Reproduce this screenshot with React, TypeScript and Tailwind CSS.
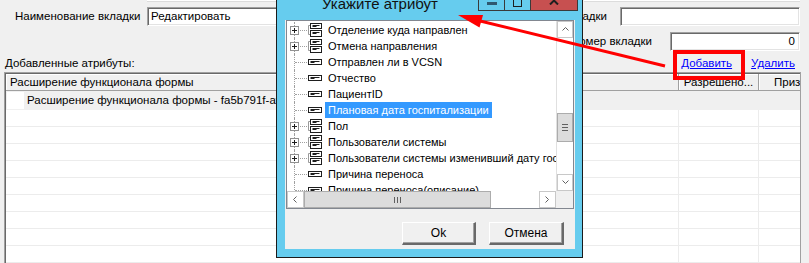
import React from "react";

const items: { t: string; g?: boolean; sel?: boolean }[] = [
  { t: "Отделение куда направлен", g: true },
  { t: "Отмена направления", g: true },
  { t: "Отправлен ли в VCSN" },
  { t: "Отчество" },
  { t: "ПациентID" },
  { t: "Плановая дата госпитализации", sel: true },
  { t: "Пол", g: true },
  { t: "Пользователи системы", g: true },
  { t: "Пользователи системы изменивший дату госпитализации", g: true },
  { t: "Причина переноса" },
  { t: "Причина переноса(описание)" },
];

const inputCls =
  "bg-white border border-t-[#a0a0a0] border-l-[#a0a0a0] border-r-white border-b-white shadow-[inset_1px_1px_0_#696969,inset_-1px_-1px_0_#e3e3e3]";

function GroupIcon() {
  return (
    <svg width="16" height="16" viewBox="0 0 16 16" className="shrink-0">
      <path d="M1.5 3.5V12.5M1.5 3.5H3.5M1.5 12.5H3.5" stroke="#9a9a9a" fill="none" />
      <rect x="3.5" y="1.5" width="11" height="5" fill="#fff" stroke="#1e1e1e" />
      <path d="M5.5 3.5H12.5M5.5 4.5H9.5" stroke="#1e1e1e" />
      <rect x="3.5" y="8.5" width="11" height="6" fill="#fff" stroke="#1e1e1e" />
      <path d="M5.5 10.5H12.5M5.5 11.5H9.5" stroke="#1e1e1e" />
    </svg>
  );
}

function LeafIcon() {
  return (
    <svg width="16" height="16" viewBox="0 0 16 16" className="shrink-0">
      <rect x="1.5" y="5.5" width="13" height="5" fill="#fff" stroke="#1e1e1e" />
      <path d="M3.5 7.5H12.5M3.5 8.5H7.5" stroke="#1e1e1e" />
    </svg>
  );
}

function TreeRow({ t, g, sel }: { t: string; g?: boolean; sel?: boolean }) {
  return (
    <div className="flex h-[16px] shrink-0 items-center whitespace-nowrap">
      <div className="relative h-full w-[20px] shrink-0">
        <div className="absolute left-[7px] top-0 h-full border-l border-dotted border-[#a0a0a0]" />
        <div className="absolute left-[8px] top-[8px] w-[12px] border-t border-dotted border-[#a0a0a0]" />
        {g && (
          <div className="absolute left-[3px] top-[4px] flex h-[9px] w-[9px] items-center justify-center border border-[#919191] bg-white">
            <svg width="7" height="7" viewBox="0 0 7 7">
              <path d="M1 3.5H6M3.5 1V6" stroke="#1e1e1e" />
            </svg>
          </div>
        )}
      </div>
      {g ? <GroupIcon /> : <LeafIcon />}
      <span
        className={
          "ml-[2px] flex h-full items-center px-[3px] " +
          (sel ? "bg-[#3399ff] text-white" : "text-black")
        }
      >
        {t}
      </span>
    </div>
  );
}

function Chevron({ dir }: { dir: "up" | "down" | "left" | "right" }) {
  const d =
    dir === "up"
      ? "M1.5 5.5L4.5 2.5L7.5 5.5"
      : dir === "down"
      ? "M1.5 2.5L4.5 5.5L7.5 2.5"
      : dir === "left"
      ? "M5.5 1.5L2.5 4.5L5.5 7.5"
      : "M2.5 1.5L5.5 4.5L2.5 7.5";
  return (
    <svg width="9" height="9" viewBox="0 0 9 9">
      <path d={d} stroke="#606060" fill="none" />
    </svg>
  );
}

function Btn3D({ children, w }: { children: React.ReactNode; w: string }) {
  return (
    <div
      className={
        "flex h-[23px] items-center justify-center border-t border-l border-t-white border-l-white border-r-2 border-b-2 border-r-[#696969] border-b-[#696969] bg-[#f0f0f0] text-[12px] shadow-[inset_-1px_-1px_0_#a0a0a0] " +
        w
      }
    >
      {children}
    </div>
  );
}

export default function App() {
  const whiteRows = Array.from({ length: 10 });
  return (
    <div className="relative h-[263px] w-[809px] overflow-hidden bg-[#f0f0f0] font-['Liberation_Sans',Arial,sans-serif] text-[11.5px] leading-[13px] text-black">
      <div className="flex h-full flex-col">
        {/* partially visible inputs above */}
        <div className="flex h-[2px] shrink-0">
          <div className="ml-[147px] w-[330px] border-b border-[#dcdcdc] bg-white" />
          <div className="ml-auto mr-[9px] w-[216px] border-b border-[#dcdcdc] bg-white" />
        </div>

        {/* Row A */}
        <div className="mt-[5px] flex h-[19px] shrink-0 items-center">
          <span className="w-[147px] whitespace-nowrap pl-[15px]">Наименование вкладки</span>
          <div className={"flex h-full w-[330px] items-center pl-[3px] " + inputCls}>Редактировать</div>
          <div className="ml-auto mr-[9px] flex h-full items-center">
            <span className="mr-[13px] whitespace-nowrap">Наименование вкладки</span>
            <div className={"h-full w-[180px] " + inputCls} />
          </div>
        </div>

        {/* Row B */}
        <div className="mt-[6px] flex h-[19px] shrink-0 items-center">
          <div className="ml-auto mr-[9px] flex h-full items-center">
            <span className="mr-[18px] whitespace-nowrap">Порядковый номер вкладки</span>
            <div className={"flex h-full w-[130px] items-center justify-end pr-[4px] " + inputCls}>0</div>
          </div>
        </div>

        {/* Row C */}
        <div className="mt-[3px] flex h-[18px] shrink-0 items-center">
          <span className="pl-[5px]">Добавленные атрибуты:</span>
          <div className="ml-auto mr-[14px] flex items-center gap-[19px]">
            <span className="text-[#0000ff] underline">Добавить</span>
            <span className="text-[#0000ff] underline">Удалить</span>
          </div>
        </div>

        {/* Grid */}
        <div className="ml-[4px] flex min-h-0 w-[797px] flex-1 flex-col overflow-hidden border-l border-t border-r border-l-[#a0a0a0] border-t-[#a0a0a0] border-r-[#a0a0a0] bg-white">
          <div className="flex h-full flex-col border-l border-t border-[#696969]">
            {/* header */}
            <div className="flex h-[17px] shrink-0">
              <div className="flex w-[673px] items-center overflow-hidden whitespace-nowrap border-b border-r border-[#a0a0a0] bg-[#f0f0f0] pl-[4px] shadow-[inset_1px_1px_0_#fff]">
                Расширение функционала формы
              </div>
              <div className="flex w-[80px] items-center justify-center overflow-hidden whitespace-nowrap border-b border-r border-[#a0a0a0] bg-[#f0f0f0] shadow-[inset_1px_1px_0_#fff]">
                Разрешено...
              </div>
              <div className="flex min-w-0 flex-1 items-center overflow-hidden whitespace-nowrap border-b border-[#a0a0a0] bg-[#f0f0f0] pl-[15px] shadow-[inset_1px_1px_0_#fff]">
                Признак
              </div>
            </div>
            {/* gray current row */}
            <div className="flex h-[19px] shrink-0 items-center bg-[#f0f0f0]">
              <div className="ml-[1px] h-[17px] w-[17px] bg-white" />
              <span className="ml-[3px] whitespace-nowrap">
                Расширение функционала формы - fa5b791f-af12-4c1e-9d3a-5b7e0c2a1f44
              </span>
            </div>
            {whiteRows.map((_, i) => (
              <div key={i} className="flex h-[17px] shrink-0 border-b border-[#ececec]">
                <div className="w-[673px] border-r border-[#ececec]" />
                <div className="w-[80px] border-r border-[#ececec]" />
                <div className="flex-1" />
              </div>
            ))}
          </div>
        </div>
      </div>

      {/* Dialog */}
      <div className="absolute left-[276px] top-[-11px] flex h-[269px] w-[307px] flex-col border border-[#1b1b1b] bg-[#66ccee]">
        {/* title bar */}
        <div className="flex h-[30px] shrink-0 items-start">
          <span className="ml-[45px] mt-[5px] whitespace-nowrap text-[15px] leading-[18px] text-[#111]">
            Укажите атрибут
          </span>
          <div className="ml-auto mr-[4px] flex">
            <div className="flex h-[21px] w-[27px] items-end justify-center border border-t-0 border-[#3a3a3a] pb-[5px]">
              <div className="h-[3px] w-[10px] bg-[#2f5870]" />
            </div>
            <div className="flex h-[21px] w-[26px] items-end justify-center border-b border-r border-[#3a3a3a] pb-[3px]">
              <div className="h-[9px] w-[9px] border border-t-2 border-[#1e1e1e]" />
            </div>
            <div className="flex h-[21px] w-[47px] items-center justify-center border-b border-r border-[#3a3a3a] bg-[#c75050]">
              <svg width="10" height="9" viewBox="0 0 10 9">
                <path d="M1 0.5L9 8.5M9 0.5L1 8.5" stroke="#1e1e1e" strokeWidth="2" />
              </svg>
            </div>
          </div>
        </div>

        {/* client */}
        <div className="ml-[8px] flex h-[229px] w-[290px] flex-col bg-[#f0f0f0]">
          {/* tree */}
          <div className="ml-[1px] flex h-[189px] w-[288px] flex-col border border-[#828790] bg-white">
            <div className="flex h-[170px] shrink-0">
              <div className="flex w-[269px] flex-col overflow-hidden pt-[1px] text-[11px]">
                {items.map((it) => (
                  <TreeRow key={it.t} {...it} />
                ))}
              </div>
              {/* vertical scrollbar */}
              <div className="flex w-[17px] flex-col border-l border-[#e0e0e0] bg-white">
                <div className="flex h-[17px] items-center justify-center border border-[#c8c8c8]">
                  <Chevron dir="up" />
                </div>
                <div className="mt-[75px] flex h-[29px] flex-col items-center justify-center gap-[2px] border border-[#acacac] bg-[#dcdcdc]">
                  <div className="h-[1px] w-[6px] bg-[#606060]" />
                  <div className="h-[1px] w-[6px] bg-[#606060]" />
                  <div className="h-[1px] w-[6px] bg-[#606060]" />
                </div>
                <div className="flex-1" />
                <div className="flex h-[17px] items-center justify-center border border-[#c8c8c8]">
                  <Chevron dir="down" />
                </div>
              </div>
            </div>
            {/* horizontal scrollbar */}
            <div className="flex h-[17px] shrink-0">
              <div className="flex w-[17px] items-center justify-center border border-[#c8c8c8]">
                <Chevron dir="left" />
              </div>
              <div className="flex w-[187px] items-center justify-center gap-[2px] border border-[#acacac] bg-[#dcdcdc]">
                <div className="h-[6px] w-[1px] bg-[#606060]" />
                <div className="h-[6px] w-[1px] bg-[#606060]" />
                <div className="h-[6px] w-[1px] bg-[#606060]" />
              </div>
              <div className="flex-1" />
              <div className="flex w-[17px] items-center justify-center border border-[#c8c8c8]">
                <Chevron dir="right" />
              </div>
              <div className="w-[17px] bg-[#f0f0f0]" />
            </div>
          </div>
          {/* buttons */}
          <div className="mt-[13px] flex justify-end gap-[13px] pr-[11px]">
            <Btn3D w="w-[74px]">Ok</Btn3D>
            <Btn3D w="w-[75px]">Отмена</Btn3D>
          </div>
        </div>
      </div>

      {/* red annotation rectangle */}
      <div className="absolute left-[673px] top-[50px] h-[30px] w-[72px] border-4 border-[#ff0000]" />

      {/* red arrow */}
      <svg className="pointer-events-none absolute left-0 top-0" width="809" height="263" viewBox="0 0 809 263">
        <line x1="665" y1="66" x2="476" y2="20" stroke="#ff0000" strokeWidth="3" />
        <polygon points="458,15 479.5,27.5 483,15" fill="#ff0000" />
      </svg>
    </div>
  );
}
